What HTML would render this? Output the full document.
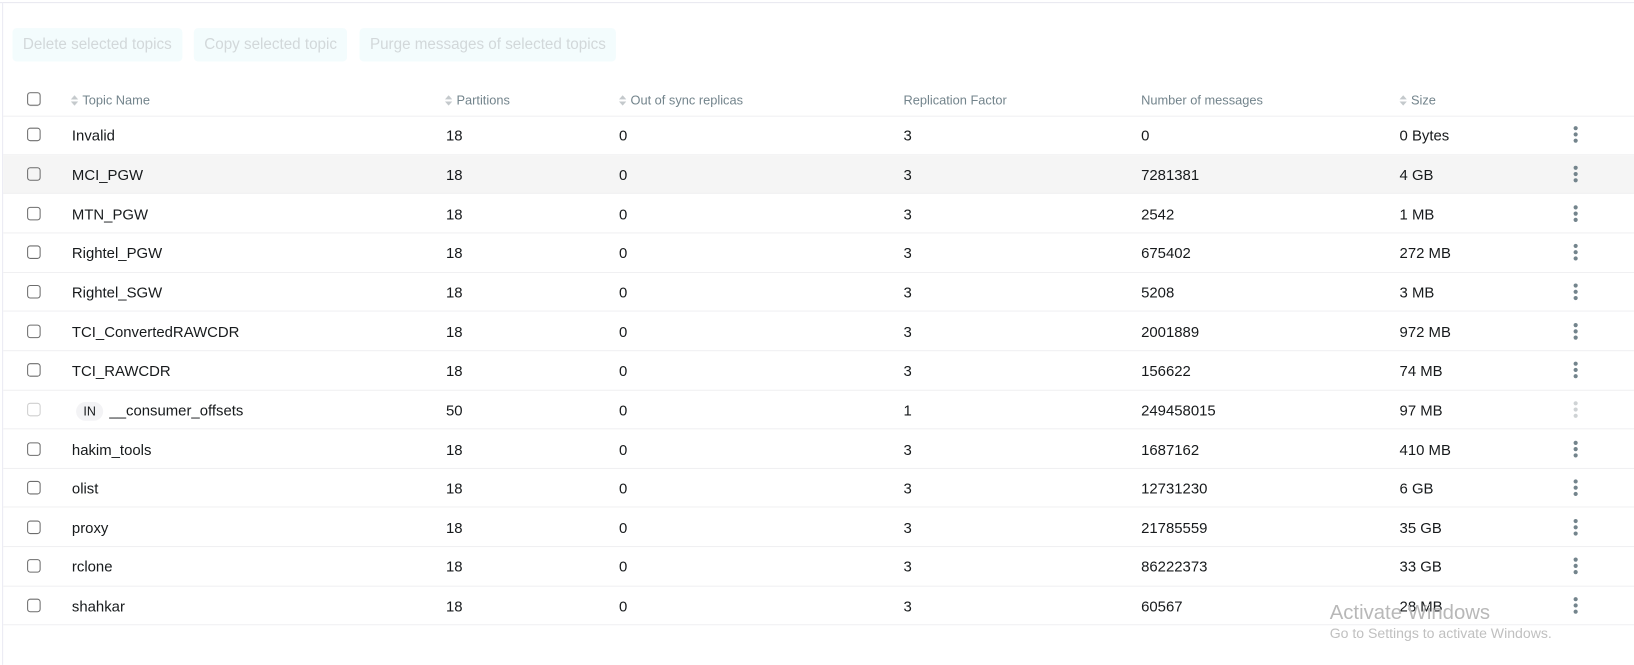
<!DOCTYPE html>
<html><head><meta charset="utf-8"><style>
*{margin:0;padding:0;box-sizing:border-box}
body{width:1634px;height:638px;overflow:hidden;background:#fff;font-family:"Liberation Sans",Arial,sans-serif;position:relative;color:#171a1c}
#w{position:absolute;left:0;top:0;width:1568px;height:612px;transform:scale(1.0421);transform-origin:0 0}
.topb{position:absolute;left:0;top:2px;width:1568px;height:1px;background:#e8e8f0}
.leftb{position:absolute;left:2px;top:2px;width:1px;height:636px;background:#ececf4}
.btn{position:absolute;top:27px;height:32px;background:#f3fcfd;color:#d2d8da;font-size:14.6px;line-height:32px;padding:0 10px;border-radius:4px}
.row{position:absolute;left:3px;width:1565px;border-bottom:1px solid #f0f0f2;font-size:14.3px}
.row span{position:absolute;top:50%;transform:translateY(-40%);white-space:nowrap}
.row span.cb,.row span.dots{transform:translateY(-50%)}
.hdr span{font-size:12.3px;color:#73848c}
.cb{width:13px;height:13px;border:1px solid #6d6d6d;border-radius:3px;left:23px}
.cb.dis{border-color:#cfcfcf}
.ar{display:inline-block;width:7px;height:10px;vertical-align:-1px;margin-right:4px}
.dots{left:1507px;width:4px}
.dots i{display:block;width:4px;height:4px;border-radius:2px;background:#73848c;margin:2px 0}
.dots.dis i{background:#cfd3d5}
.tag{display:inline-block;background:#f3f3f5;color:#171a1c;font-size:12px;padding:2px 7px;border-radius:10px;margin-right:6px}
.wm{position:absolute;left:1276px;top:577px;font-size:19.5px;color:#b8b8b8}
.wm2{position:absolute;left:1276px;top:600px;font-size:13.5px;color:#c0c0c0}
</style></head><body><div id="w">
<div class="topb"></div><div class="leftb"></div>
<div class="btn" style="left:12px">Delete selected topics</div>
<div class="btn" style="left:186px">Copy selected topic</div>
<div class="btn" style="left:345px">Purge messages of selected topics</div>

<div class="row hdr" style="top:78px;height:34px">
<span class="cb"></span>
<span style="left:65px"><svg class="ar" viewBox="0 0 7 10"><path d="M3.5 0L7 4H0z M3.5 10L0 6h7z" fill="#c4c9cc"/></svg>Topic Name</span>
<span style="left:424px"><svg class="ar" viewBox="0 0 7 10"><path d="M3.5 0L7 4H0z M3.5 10L0 6h7z" fill="#c4c9cc"/></svg>Partitions</span>
<span style="left:591px"><svg class="ar" viewBox="0 0 7 10"><path d="M3.5 0L7 4H0z M3.5 10L0 6h7z" fill="#c4c9cc"/></svg>Out of sync replicas</span>
<span style="left:864px">Replication Factor</span>
<span style="left:1092px">Number of messages</span>
<span style="left:1352px;margin-left:-12px"><svg class="ar" viewBox="0 0 7 10"><path d="M3.5 0L7 4H0z M3.5 10L0 6h7z" fill="#c4c9cc"/></svg>Size</span>
</div>

<div id="rows"></div>
<div class="wm">Activate Windows</div>
<div class="wm2">Go to Settings to activate Windows.</div>
</div>
<script>
var d=[["Invalid",18,3,"0","0 Bytes"],["MCI_PGW",18,3,"7281381","4 GB"],["MTN_PGW",18,3,"2542","1 MB"],["Rightel_PGW",18,3,"675402","272 MB"],["Rightel_SGW",18,3,"5208","3 MB"],["TCI_ConvertedRAWCDR",18,3,"2001889","972 MB"],["TCI_RAWCDR",18,3,"156622","74 MB"],["__consumer_offsets",50,1,"249458015","97 MB"],["hakim_tools",18,3,"1687162","410 MB"],["olist",18,3,"12731230","6 GB"],["proxy",18,3,"21785559","35 GB"],["rclone",18,3,"86222373","33 GB"],["shahkar",18,3,"60567","28 MB"]];
var h="";
d.forEach(function(r,i){
var top=111+i*37.65,dis=i==7;
h+='<div class="row" style="top:'+top+'px;height:37.65px;'+(i==1?'background:#f5f5f5':'')+'">'+
'<span class="cb'+(dis?' dis':'')+'"></span>'+
'<span style="left:'+(dis?70:66)+'px">'+(dis?'<span class="tag" style="position:static;transform:none">IN</span>':'')+r[0]+'</span>'+
'<span style="left:425px">'+r[1]+'</span><span style="left:591px">0</span><span style="left:864px">'+r[2]+'</span>'+
'<span style="left:1092px">'+r[3]+'</span><span style="left:1340px">'+r[4]+'</span>'+
'<span class="dots'+(dis?' dis':'')+'"><i></i><i></i><i></i></span></div>';
});
document.getElementById("rows").innerHTML=h;
</script>
</body></html>
